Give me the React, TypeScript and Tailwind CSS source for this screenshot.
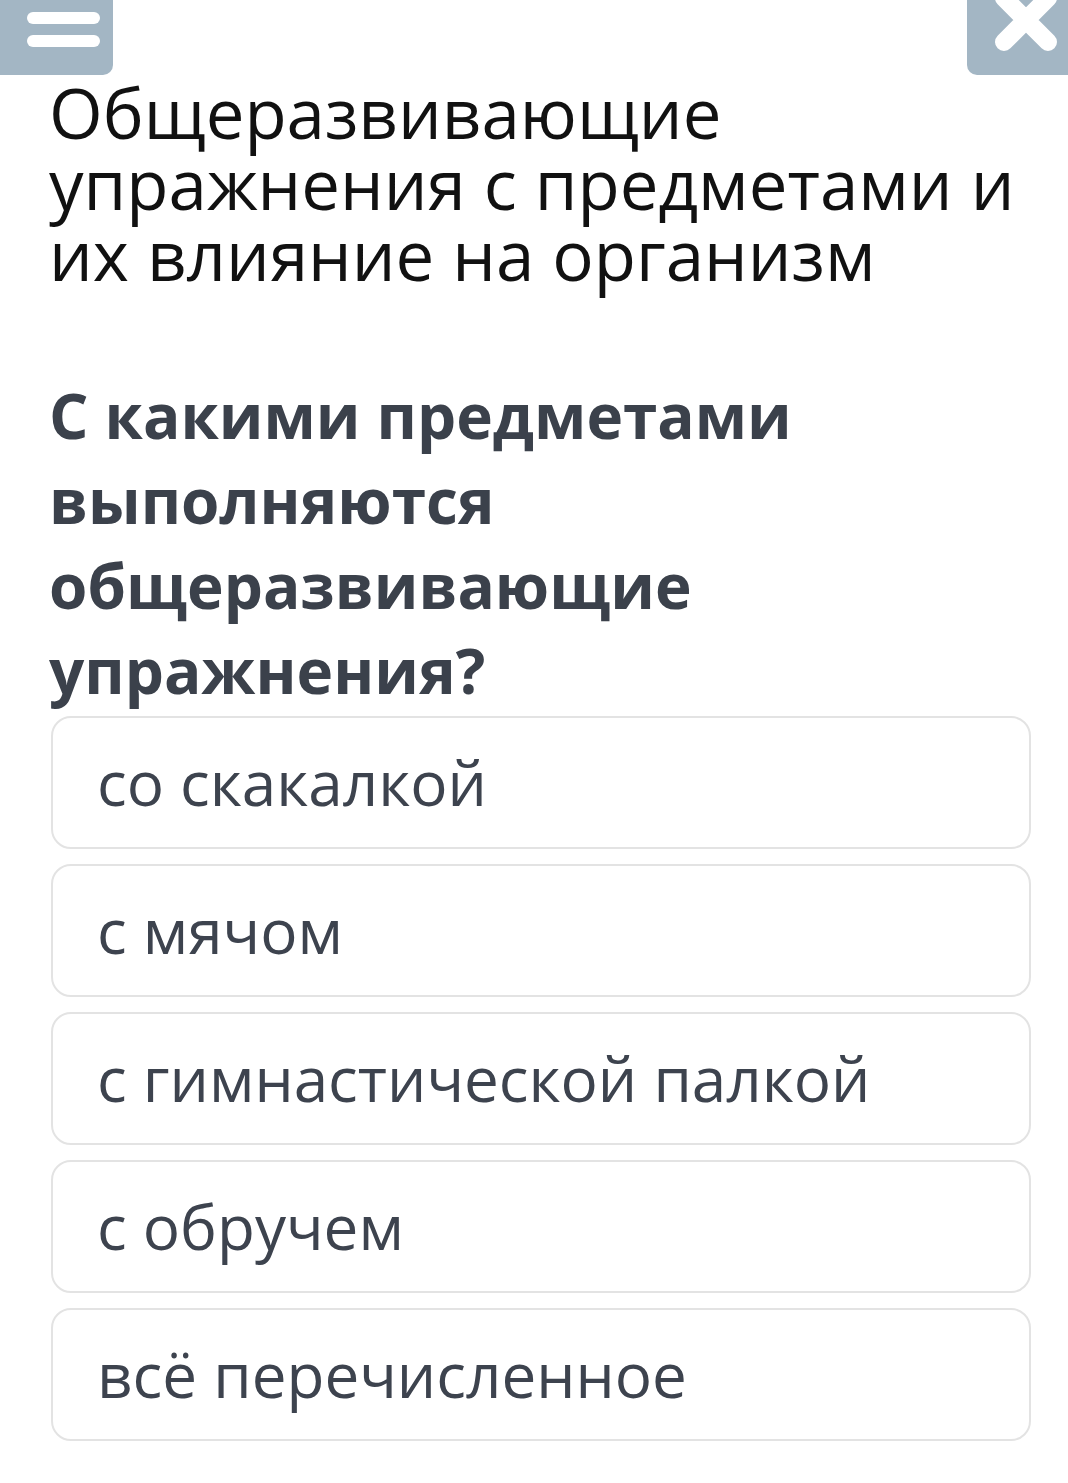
import React from "react";

const options = [
  "со скакалкой",
  "с мячом",
  "с гимнастической палкой",
  "с обручем",
  "всё перечисленное",
];

function MenuButton() {
  return (
    <button className="flex h-[75px] w-[113px] flex-col items-start justify-start gap-[11px] rounded-br-[10px] bg-[#a3b6c4] pl-[27px] pt-[12px]">
      <span className="block h-[12px] w-[73px] rounded-full bg-white" />
      <span className="block h-[12px] w-[73px] rounded-full bg-white" />
    </button>
  );
}

function CloseButton() {
  return (
    <button className="relative h-[75px] w-[101px] overflow-hidden rounded-bl-[10px] bg-[#a3b6c4]">
      <svg
        className="absolute left-[20px] top-[-19px]"
        width="78"
        height="78"
        viewBox="0 0 78 78"
      >
        <path
          d="M17 17 L61 61 M61 17 L17 61"
          stroke="#fff"
          strokeWidth="18"
          strokeLinecap="round"
        />
      </svg>
    </button>
  );
}

export default function App() {
  return (
    <div className="min-h-[1483px] w-[1068px] bg-white font-['Open_Sans',sans-serif]">
      <div className="flex justify-between">
        <MenuButton />
        <CloseButton />
      </div>
      <div className="pl-[49px] pr-[20px]">
        <h1 className="mt-[2px] text-[69px] font-normal leading-[71px] text-[#111]">
          Общеразвивающие упражнения с предметами и их влияние на организм
        </h1>
        <h2 className="mt-[83px] text-[62px] font-bold leading-[85px] text-[#3b414b]">
          С какими предметами выполняются общеразвивающие упражнения?
        </h2>
      </div>
      <div className="flex flex-col gap-[15px] pl-[51px] pr-[37px] pt-[3px]">
        {options.map((o) => (
          <div
            key={o}
            className="flex h-[133px] items-center rounded-[20px] border-2 border-[#e3e3e3] pl-[44px] text-[62px] text-[#3d434e]"
          >
            {o}
          </div>
        ))}
      </div>
    </div>
  );
}
